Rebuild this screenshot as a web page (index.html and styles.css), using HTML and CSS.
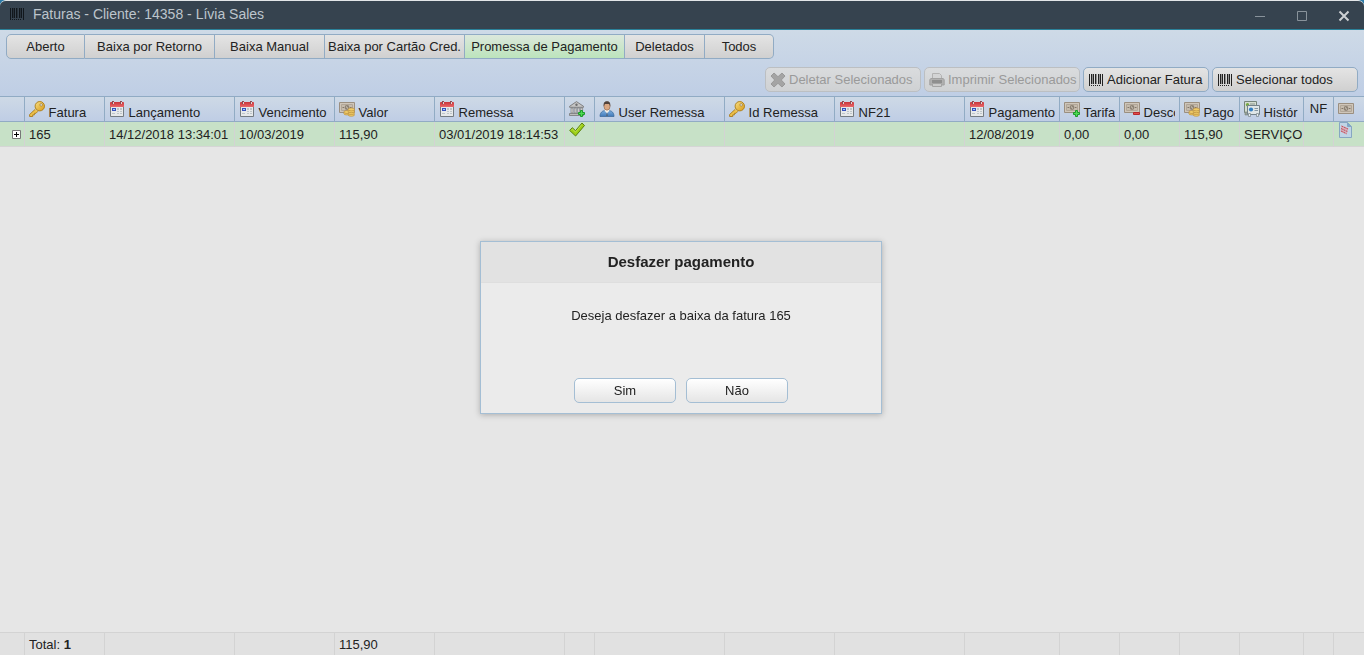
FILE: index.html
```html
<!DOCTYPE html>
<html lang="pt-BR">
<head>
<meta charset="utf-8">
<title>Faturas</title>
<link rel="stylesheet" href="styles.css">
</head>
<body>
<svg class="sprite" aria-hidden="true">
  <defs>
    <linearGradient id="gold" x2="1" y2="1"><stop stop-color="#f7e08a"/><stop offset="1" stop-color="#d99a14"/></linearGradient>
    <linearGradient id="blue" x2="0" y2="1"><stop stop-color="#7fb0e0"/><stop offset="1" stop-color="#3f78b8"/></linearGradient>
    <linearGradient id="red" x2="0" y2="1"><stop stop-color="#c9353b"/><stop offset="1" stop-color="#e8686a"/></linearGradient>
  </defs>
  <symbol id="barcode" viewBox="0 0 16 16"><path fill="currentColor" d="M1 2h1v12H1zM3 2h1v10H3zM5 2h1v10H5zM7 2h1v10H7zM10 2h1v10h-1zM12 2h1v10h-1zM14 2h1v12h-1zM3 13h1v1H3zM5 13h1v1H5zM7 13h1v1H7zM9 13h1v1H9zM11 13h1v1h-1z"/><path fill="currentColor" opacity=".4" d="M4 2h1v10H4zM8 2h1v10H8zM11 2h1v10h-1z"/></symbol>
  <symbol id="key" viewBox="0 0 16 16"><path d="M6.200 8.300.6 13.500v2h3.100v-1.600h1.700v-1.600h1.600l1.900-2" fill="#edc14a" stroke="#a97b1c" stroke-width=".9"/><circle cx="10.800" cy="5.200" r="4.700" fill="url(#gold)" stroke="#ad7d16" stroke-width=".9"/><circle cx="12.200" cy="3.900" r="1.300" fill="#d5dfeb" stroke="#a97b1c" stroke-width=".7"/></symbol>
  <symbol id="calendar" viewBox="0 0 16 16"><path d="M1.500 4.500h13v11h-13z" fill="#e6e9ea" stroke="#747c82"/><path d="M1 2q0-1 1-1h12q1 0 1 1v4H1z" fill="url(#red)"/><path d="M3 0h2v3H3zM11 0h2v3h-2z" fill="#8a4c51"/><path d="M4 1h1v2H4zM12 1h1v2h-1z" fill="#e3d3d5"/><path d="M3 7h4v3H3z" fill="#3551bd"/><path d="M4 8h2v1H4z" fill="#a9c9ff"/><path d="M8 7h2v2H8zM11 7h2v2h-2zM8 10h2v1H8zM11 10h2v1h-2zM3 12h3v1H3zM8 12h2v1H8zM11 12h2v1h-2z" fill="#bdc5c9"/></symbol>
  <symbol id="bill" viewBox="0 0 16 16"><path d="M.5 2.500h15v10H.5z" fill="#cfc6ba" stroke="#9b8f80"/><path d="M2.500 4.500h11v6h-11z" fill="#c6bcae" stroke="#b1a698"/><circle cx="8" cy="7.500" r="2.400" fill="#8d8275"/><path d="M7 6.500h1v1H7zM8 7.500h1v1H8z" fill="#d9d1c4"/><path d="M3.500 7H5v1H3.500zM11 7h1.500v1H11z" fill="#82776a"/></symbol>
  <symbol id="coins" viewBox="0 0 16 16"><use href="#bill" y="-1"/><g fill="#efcb66" stroke="#b1863a" stroke-width=".6"><ellipse cx="8" cy="12.500" rx="3.200" ry="1.500"/><ellipse cx="8" cy="11" rx="3.200" ry="1.500"/><ellipse cx="12.300" cy="13.800" rx="3.200" ry="1.500"/><ellipse cx="12.300" cy="12" rx="3.200" ry="1.500"/><ellipse cx="12.300" cy="10.200" rx="3.200" ry="1.500"/><ellipse cx="12.300" cy="8.400" rx="3.200" ry="1.500"/></g></symbol>
  <symbol id="plus" viewBox="0 0 16 16"><path d="M11.500 9.500h2v2h2v2h-2v2h-2v-2h-2v-2h2z" fill="#4ddb52" stroke="#1c9a2b"/></symbol>
  <symbol id="bill-add" viewBox="0 0 16 16"><use href="#bill" y="-1"/><use href="#plus"/></symbol>
  <symbol id="bill-less" viewBox="0 0 16 16"><use href="#bill" y="-1"/><path d="M9.500 11.500h6v2h-6z" fill="#e14b48" stroke="#b8282c"/></symbol>
  <symbol id="bank" viewBox="0 0 16 16"><path d="M.6 5.300 7.500.6l7 4.700v1H.6z" fill="#c6c6c6" stroke="#777" stroke-width=".9"/><circle cx="7.500" cy="3.800" r="1.200" fill="#6e6e6e"/><path d="M2 7h2v5H2zM5.200 7h2v5h-2zM8.400 7h2v5h-2zM11.600 7h2v5h-2z" fill="#d2d2d2" stroke="#747474" stroke-width=".6"/><path d="M.5 12.500h14v2H.5z" fill="#bcbcbc" stroke="#777" stroke-width=".8"/><use href="#plus"/></symbol>
  <symbol id="user" viewBox="0 0 16 16"><path d="M1 15.500c0-4 2.400-5.700 5-6h4c2.600.3 5 2 5 6z" fill="url(#blue)" stroke="#386696" stroke-width=".7"/><path d="m5.500 9.500 2.500 3 2.500-3-1-1.500h-3z" fill="#f5f1e9"/><path d="m8 11 1 4H7z" fill="#55687d"/><ellipse cx="8" cy="5.300" rx="3" ry="3.900" fill="#dba883" stroke="#8b6045" stroke-width=".6"/><path d="M4.700 5.500C4.200 1.800 5.500.2 8 .2s3.800 1.600 3.300 5.300L10.200 3H5.800z" fill="#51423a"/></symbol>
  <symbol id="history" viewBox="0 0 16 16"><path d="M.5.500h12v11H.5z" fill="#d4ddd0" stroke="#76847b"/><path d="M1 11h3v3H1z" fill="#98a29a" stroke="#76847b" stroke-width=".6"/><circle cx="3.500" cy="3.800" r="1.700" fill="#77a940"/><path d="M6 2.500h5v1H6z" fill="#89958f"/><path d="M3.500 4.500h12v9h-12z" fill="#dfe6e7" stroke="#74828a"/><circle cx="7" cy="8.500" r="2.100" fill="#327fc3"/><path d="M10.500 7H14v1h-3.500zM10.500 9H14v1h-3.500z" fill="#8596a2"/><path d="M4.500 12.500h2v3h-2zM12.500 12.500h2v3h-2z" fill="#e6ebec" stroke="#778489" stroke-width=".7"/></symbol>
  <symbol id="check" viewBox="0 0 16 16"><path d="m.7 8.500 2.600-2.800 3.200 3L13 1l2.500 2.500L6.600 14z" fill="#9dcf16" stroke="#587f10" stroke-linejoin="round"/><path d="m2.300 8.300 1.100-1.200 3.100 2.900L13 2.400" fill="none" stroke="#c3e55c" stroke-width=".8"/></symbol>
  <symbol id="delete" viewBox="0 0 16 16"><path d="m4 1 4 3.700L12 1l3 3-3.700 4 3.700 4-3 3-4-3.700L4 15l-3-3 3.700-4L1 4z" fill="#a4a4a4" stroke="#999"/></symbol>
  <symbol id="printer" viewBox="0 0 16 16"><path d="M3.500 7V1.500h7l2 2V7" fill="#d3d4d5" stroke="#b2b2b2"/><path d="M.8 7.500 2 6.500h12l1.200 1V13H.8z" fill="#b0b0b0" stroke="#a1a1a1"/><path d="M3 8h10v3H3z" fill="#8f8f8f"/><path d="M3.500 11.500h9v3h-9z" fill="#cbcbcb" stroke="#a4a4a4"/></symbol>
  <symbol id="doc" viewBox="0 0 16 16"><path d="M1.500.500h8l4 4v11h-12z" fill="#c0d5e6" stroke="#86a6c2"/><path d="M9.500.500v4h4" fill="#7ca7cc" stroke="#86a6c2"/><path d="m3.500 3.500 7 3-2 6-6-3z" fill="#dc9faa" opacity=".7"/><g fill="none" stroke="#c44a58" stroke-width="1" stroke-dasharray="2 .7"><path d="m3.500 4 6.500 3M3 6.500l6.300 3M3 9l5.500 2.700"/></g></symbol>
</svg>

<main class="window">
  <header class="titlebar">
    <svg class="icon"><use href="#barcode"/></svg>
    <h1 class="title">Faturas - Cliente: 14358 - Lívia Sales</h1>
    <div class="controls">
      <button type="button" aria-label="Minimizar"><svg viewBox="0 0 12 12"><path d="M1 6.500h10" stroke="#89939b"/></svg></button>
      <button type="button" aria-label="Maximizar"><svg viewBox="0 0 12 12"><path d="M1.500 1.500h9v9h-9z" stroke="#89939b"/></svg></button>
      <button type="button" aria-label="Fechar"><svg viewBox="0 0 12 12"><path d="m1.500 1.500 9 9m0-9-9 9" stroke="#cdd1d4" stroke-width="2"/></svg></button>
    </div>
  </header>

  <section class="toolbar">
    <nav class="tabs">
      <button class="tab tab-aberto" type="button">Aberto</button>
      <button class="tab tab-retorno" type="button">Baixa por Retorno</button>
      <button class="tab tab-manual" type="button">Baixa Manual</button>
      <button class="tab tab-cartao" type="button">Baixa por Cartão Cred.</button>
      <button class="tab tab-promessa active" type="button">Promessa de Pagamento</button>
      <button class="tab tab-deletados" type="button">Deletados</button>
      <button class="tab tab-todos" type="button">Todos</button>
    </nav>
    <div class="actions">
      <button class="action wide" type="button" disabled><svg class="icon"><use href="#delete"/></svg>Deletar Selecionados</button>
      <button class="action wide" type="button" disabled><svg class="icon"><use href="#printer"/></svg>Imprimir Selecionados</button>
      <button class="action add" type="button"><svg class="icon"><use href="#barcode"/></svg>Adicionar Fatura</button>
      <button class="action all" type="button"><svg class="icon"><use href="#barcode"/></svg>Selecionar todos</button>
    </div>
  </section>

  <div class="grid-area">
    <table class="grid">
      <colgroup><col class="w25"><col class="w80"><col class="w130"><col class="w100"><col class="w100"><col class="w130"><col class="w30"><col class="w130"><col class="w110"><col class="w130"><col class="w95"><col class="w60"><col class="w60"><col class="w60"><col class="w64"><col class="w30"><col></colgroup>
      <thead>
        <tr>
          <th></th>
          <th><div class="head"><svg class="icon"><use href="#key"/></svg> Fatura</div></th>
          <th><div class="head"><svg class="icon"><use href="#calendar"/></svg> Lançamento</div></th>
          <th><div class="head"><svg class="icon"><use href="#calendar"/></svg> Vencimento</div></th>
          <th><div class="head"><svg class="icon"><use href="#coins"/></svg> Valor</div></th>
          <th><div class="head"><svg class="icon"><use href="#calendar"/></svg> Remessa</div></th>
          <th><div class="head"><svg class="icon"><use href="#bank"/></svg></div></th>
          <th><div class="head"><svg class="icon"><use href="#user"/></svg> User Remessa</div></th>
          <th><div class="head"><svg class="icon"><use href="#key"/></svg> Id Remessa</div></th>
          <th><div class="head"><svg class="icon"><use href="#calendar"/></svg> NF21</div></th>
          <th><div class="head"><svg class="icon"><use href="#calendar"/></svg> Pagamento</div></th>
          <th><div class="head"><svg class="icon"><use href="#bill-add"/></svg> Tarifa</div></th>
          <th><div class="head"><svg class="icon"><use href="#bill-less"/></svg> Desco</div></th>
          <th><div class="head"><svg class="icon"><use href="#coins"/></svg> Pago</div></th>
          <th><div class="head"><svg class="icon"><use href="#history"/></svg> Histór</div></th>
          <th class="center">NF</th>
          <th><div class="head"><svg class="icon"><use href="#bill"/></svg></div></th>
        </tr>
      </thead>
      <tbody>
        <tr>
          <td class="expand-cell"><button class="expand" type="button" aria-label="Expandir"><svg viewBox="0 0 9 9"><path d="M.5.500h8v8h-8z" fill="#fff" stroke="#777"/><path d="M2 4.500h5M4.500 2v5" stroke="#000"/></svg></button></td>
          <td>165</td><td>14/12/2018 13:34:01</td><td>10/03/2019</td><td>115,90</td><td>03/01/2019 18:14:53</td>
          <td class="top"><svg class="icon"><use href="#check"/></svg></td>
          <td></td><td></td><td></td><td>12/08/2019</td><td>0,00</td><td>0,00</td><td>115,90</td><td>SERVIÇO</td><td></td>
          <td class="top"><svg class="icon"><use href="#doc"/></svg></td>
        </tr>
      </tbody>
    </table>

    <table class="grid totals">
      <colgroup><col class="w25"><col class="w80"><col class="w130"><col class="w100"><col class="w100"><col class="w130"><col class="w30"><col class="w130"><col class="w110"><col class="w130"><col class="w95"><col class="w60"><col class="w60"><col class="w60"><col class="w64"><col class="w30"><col></colgroup>
      <tbody>
        <tr><td></td><td>Total: <b>1</b></td><td></td><td></td><td>115,90</td><td></td><td></td><td></td><td></td><td></td><td></td><td></td><td></td><td></td><td></td><td></td><td></td></tr>
      </tbody>
    </table>
  </div>
</main>

<div class="overlay">
  <section class="dialog" role="dialog" aria-labelledby="dialog-title">
    <h2 class="dialog-title" id="dialog-title">Desfazer pagamento</h2>
    <p class="dialog-text">Deseja desfazer a baixa da fatura 165</p>
    <div class="dialog-buttons">
      <button class="choice" type="button">Sim</button>
      <button class="choice" type="button">Não</button>
    </div>
  </section>
</div>
</body>
</html>
```
FILE: styles.css
```css
* { box-sizing: border-box; }

body {
  margin: 0;
  background: #2c7ba8;
  color: #222;
  font: 13px/15px "Liberation Sans", Arial, sans-serif;
}

button { font: inherit; color: inherit; margin: 0; }
.sprite { position: absolute; width: 0; height: 0; }
.icon { width: 16px; height: 16px; flex: none; }

.window {
  display: flex;
  flex-direction: column;
  height: 100vh;
  overflow: hidden;
  border-top: 1px solid #e3e6e8;
  border-radius: 6px 6px 0 0;
  background: #e6e6e6;
}

.titlebar {
  display: flex;
  align-items: center;
  height: 29px;
  padding: 0 14px 2px 9px;
  gap: 8px;
  background: #36434f;
  border-bottom: 1px solid #2b8199;
}
.titlebar > .icon { color: #11171c; }
.title { margin: 0; flex: 1; font-size: 14px; font-weight: normal; color: #bdc5cc; }
.controls { display: flex; gap: 30px; padding-top: 3px; }
.controls button { display: block; width: 12px; height: 12px; padding: 0; border: 0; background: none; }
.controls svg { display: block; width: 12px; height: 12px; fill: none; }

.toolbar { padding: 4px 6px; background: linear-gradient(#cedae7, #bfcee5); }
.tabs { display: flex; }
.tab {
  height: 25px;
  padding: 0;
  white-space: nowrap;
  border: 1px solid #91abc4;
  border-left: 0;
  background: linear-gradient(#e4e4e4, #d0d0d0);
}
.tab:first-child { border-left: 1px solid #91abc4; border-radius: 5px 0 0 5px; }
.tab:last-child { border-radius: 0 5px 5px 0; }
.tab.active { background: linear-gradient(#dce8dc, #bce4bc); }
.tab-aberto { width: 79px; }
.tab-retorno { width: 130px; }
.tab-manual { width: 110px; }
.tab-cartao { width: 140px; }
.tab-promessa { width: 160px; }
.tab-deletados { width: 80px; }
.tab-todos { width: 69px; }

.actions { display: flex; justify-content: flex-end; gap: 3px; padding-top: 8px; }
.action {
  display: flex;
  align-items: center;
  gap: 3px;
  height: 25px;
  padding: 0 4px;
  white-space: nowrap;
  border: 1px solid #91abc4;
  border-radius: 5px;
  background: linear-gradient(#e4e4e4, #d0d0d0);
}
.action:disabled { color: #9a9a9a; border-color: #bcbfc2; background: linear-gradient(#dadcde, #cfd1d3); }
.wide { width: 156px; }
.add { width: 126px; }
.all { width: 146px; }

.grid-area { display: flex; flex: 1; flex-direction: column; justify-content: space-between; }
.grid { width: 100%; table-layout: fixed; border-collapse: separate; border-spacing: 0; }
.grid th, .grid td { white-space: nowrap; text-align: left; font-weight: normal; }
.grid th {
  height: 26px;
  padding: 4px 4px 0;
  vertical-align: top;
  line-height: 15px;
  border: 1px solid #91abc4;
  border-left: 0;
  background: linear-gradient(#ced9e6, #bfcde5);
}
.grid th:last-child, .grid td:last-child { border-right: 0; }
.grid th.center { padding: 4px 0 0; text-align: center; }
.head { height: 20px; overflow: hidden; }
.grid td {
  height: 25px;
  padding: 0 4px;
  border-right: 1px solid #d3d3d3;
  border-bottom: 1px solid #d5d5d5;
  background: #c7e1c7;
}
.grid td.top { vertical-align: top; }
.grid .top .icon { display: block; }
.grid .expand-cell { padding: 0 3px 0 12px; }
.expand { display: block; width: 9px; height: 9px; padding: 0; border: 0; background: none; }
.expand svg { display: block; width: 9px; height: 9px; fill: none; }
.totals td { height: 23px; border-top: 1px solid #d3d3d3; border-bottom: 0; background: #e1e1e1; }

.w25 { width: 25px; }
.w30 { width: 30px; }
.w60 { width: 60px; }
.w64 { width: 64px; }
.w80 { width: 80px; }
.w95 { width: 95px; }
.w100 { width: 100px; }
.w110 { width: 110px; }
.w130 { width: 130px; }

.overlay { position: fixed; inset: 0; display: flex; align-items: center; justify-content: center; padding-right: 2px; }
.dialog {
  width: 402px;
  border: 1px solid #a4bed4;
  background: #ebebeb;
  box-shadow: 0 1px 6px rgba(0, 0, 0, .25);
  text-align: center;
}
.dialog-title { margin: 0; padding: 11px 0 12px; font-size: 15px; line-height: 17px; background: #e2e2e2; border-bottom: 1px solid #dedede; }
.dialog-text { margin: 0; padding: 25px 12px 55px; }
.dialog-buttons { display: flex; justify-content: center; gap: 10px; padding-bottom: 10px; }
.choice { width: 102px; height: 25px; padding: 0; border: 1px solid #a4bed4; border-radius: 5px; background: linear-gradient(#fff, #e5e5e5); }
```
